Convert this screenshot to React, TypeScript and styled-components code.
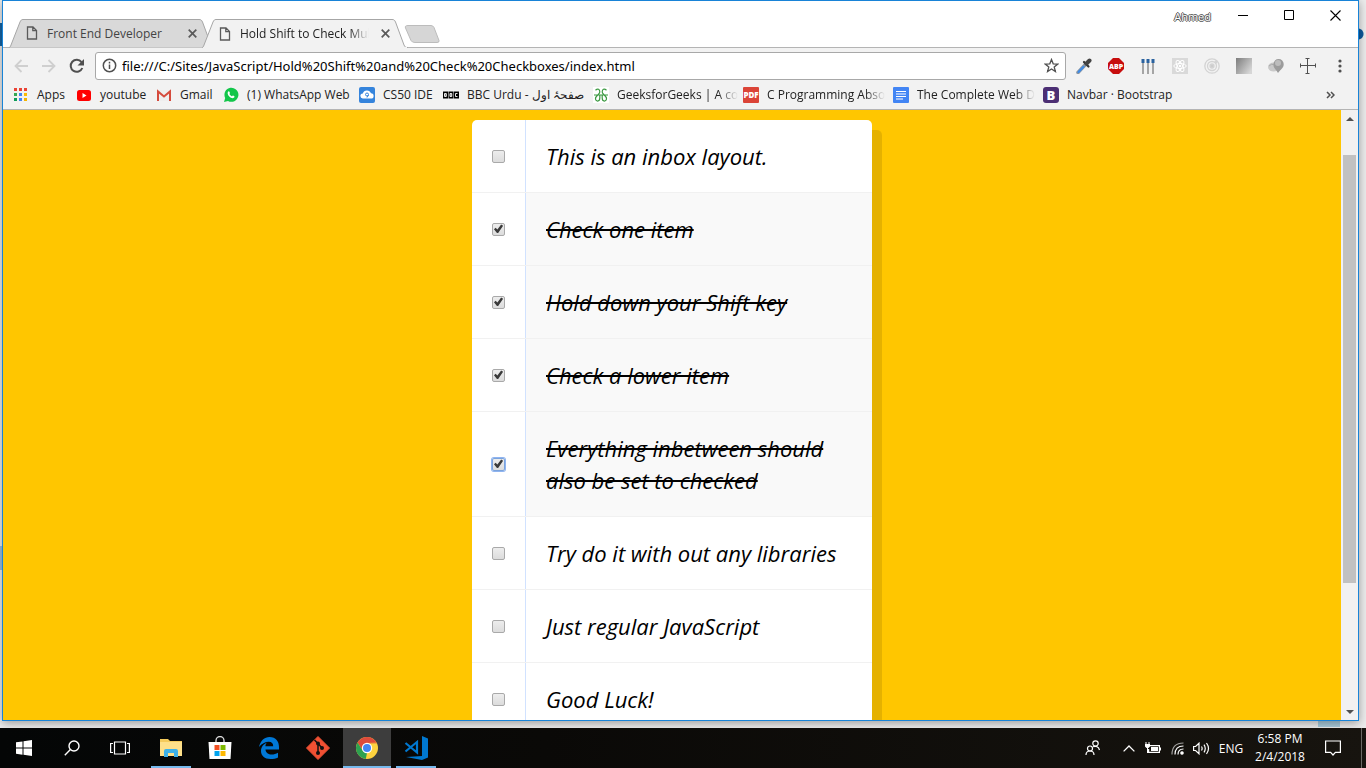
import React, { useRef, useState } from "react";
import styled, { createGlobalStyle, css } from "styled-components";

const ui = `"Segoe UI", "Open Sans", "Noto Sans", sans-serif`;

const GlobalStyle = createGlobalStyle`
  *, *::before, *::after { box-sizing: border-box; }
  body { margin: 0; font-family: ${ui}; font-size: 12px; color: #222; }
  button { border: 0; padding: 0; background: none; font: inherit; color: inherit; }
  svg { display: block; flex: none; }
`;

const Desktop = styled.div`
  height: 100vh;
  display: flex;
  flex-direction: column;
  overflow: hidden;
  background: linear-gradient(#1565a5, #1565a5) 0 23px / 3px 23px no-repeat,
    linear-gradient(#9fc0dd, #9fc0dd) 0 546px / 3px 24px no-repeat,
    radial-gradient(circle at 0 6px, #0c5a9c 5px, transparent 6px) right 1px top 28px / 7px 12px no-repeat,
    linear-gradient(#a9cbdc, #a9cbdc) right 26px bottom 41px / 22px 8px no-repeat, #ececec;
`;

const Window = styled.div`
  flex: 1;
  min-height: 0;
  margin: 0 7px 7px 2px;
  display: flex;
  flex-direction: column;
  border: 1px solid #1883d7;
  background: #fff;
  box-shadow: 0 2px 9px rgba(0, 0, 0, 0.35);
`;

const TitleBar = styled.header`
  height: 46px;
  flex: none;
  display: flex;
  justify-content: space-between;
  padding-left: 6px;
`;

const Tabs = styled.div`
  display: flex;
  align-items: flex-end;
`;

const Tab = styled.div<{ $active?: boolean }>`
  position: relative;
  z-index: ${(p) => (p.$active ? 2 : 1)};
  width: 206px;
  height: ${(p) => (p.$active ? "29px" : "28px")};
  margin-right: -13px;
  margin-bottom: ${(p) => (p.$active ? "-1px" : "0")};
  padding: 0 16px 0 17px;
  display: flex;
  align-items: center;
  gap: 9px;
  color: ${(p) => (p.$active ? "#222" : "#444")};
`;

const TabShape = styled.svg`
  position: absolute;
  inset: 0;
  z-index: -1;
`;

const fade = css`
  mask-image: linear-gradient(to left, transparent, #000 20px);
`;

const TabTitle = styled.span<{ $fade?: boolean }>`
  flex: 1;
  min-width: 0;
  white-space: nowrap;
  ${(p) => p.$fade && fade}
`;

const TabClose = styled.button`
  flex: none;
  width: 14px;
  height: 14px;
  display: grid;
  place-items: center;
`;

const NewTab = styled.button`
  margin: 0 0 4px 9px;
`;

const WindowControls = styled.div`
  display: flex;
  height: 30px;
`;

const Profile = styled.button`
  padding: 0 9px;
  font-size: 11px;
  color: #fff;
  text-shadow: 1px 0 #555, -1px 0 #555, 0 1px #555, 0 -1px #555;
`;

const WindowButton = styled.button`
  width: 46px;
  height: 28px;
  display: grid;
  place-items: center;
`;

const Toolbar = styled.div`
  height: 36px;
  flex: none;
  border-top: 1px solid #b4b4b4;
  background: #f2f2f2;
  display: flex;
  align-items: center;
  padding: 0 2px 0 4px;
`;

const NavButton = styled.button`
  width: 28px;
  height: 28px;
  display: grid;
  place-items: center;
`;

const Omnibox = styled.div`
  flex: 1;
  height: 28px;
  margin: 0 2px 0 4px;
  border: 1px solid #a8a8a8;
  border-radius: 3px;
  background: #fff;
  display: flex;
  align-items: center;
  gap: 5px;
  padding: 0 6px;
`;

const Url = styled.input`
  flex: 1;
  min-width: 0;
  border: 0;
  padding: 0;
  outline: 0;
  background: none;
  font: 13px "Segoe UI", "Noto Sans", sans-serif;
  color: #000;
`;

const Extension = styled.button`
  width: 32px;
  height: 28px;
  display: grid;
  place-items: center;
`;

const Bookmarks = styled.nav`
  height: 27px;
  flex: none;
  display: flex;
  justify-content: space-between;
  align-items: center;
  padding: 0 23px 3px 10px;
  border-bottom: 1px solid #b4b4b4;
  background: #f2f2f2;
`;

const BookmarkList = styled.div`
  display: flex;
`;

const Bookmark = styled.a<{ $width: number }>`
  width: ${(p) => p.$width}px;
  display: flex;
  align-items: center;
  gap: 8px;
  color: #222;
  text-decoration: none;
  white-space: nowrap;
`;

const BookmarkLabel = styled.span<{ $fade?: boolean }>`
  ${(p) => p.$fade && fade}
`;

const Viewport = styled.div`
  flex: 1;
  min-height: 0;
  display: flex;
`;

const Page = styled.main`
  flex: 1;
  min-width: 0;
  overflow: hidden;
  padding-top: 10px;
  background: #ffc600;
`;

const Inbox = styled.div`
  max-width: 400px;
  margin: 0 auto;
  border-radius: 5px;
  background: #fff;
  box-shadow: 10px 10px 0 rgba(0, 0, 0, 0.1);
`;

const Item = styled.div`
  display: flex;
  align-items: center;
  border-bottom: 1px solid #f1f1f1;
`;

const Check = styled.input`
  appearance: none;
  flex: none;
  width: 13px;
  height: 13px;
  margin: 20px;
  border: 1px solid #a9a9a9;
  border-radius: 2px;
  background: linear-gradient(#ededed, #dcdcdc);
  &:checked::before {
    content: "";
    display: block;
    width: 11px;
    height: 11px;
    background: #3a3a3a;
    clip-path: polygon(9% 52%, 24% 38%, 40% 55%, 74% 8%, 92% 20%, 47% 86%, 36% 86%);
  }
`;

const FocusCheck = styled(Check)`
  border-color: #7ba3dc;
  box-shadow: 0 0 0 1px #8fb4f0;
`;

const ItemText = styled.label<{ $done: boolean }>`
  flex: 1;
  padding: 20px;
  border-left: 1px solid #d1e2ff;
  font: italic 22px/32px "MV Boli", "Open Sans", sans-serif;
  color: #000;
  ${(p) => p.$done && css`
    background: #f9f9f9;
    text-decoration: line-through 2px;
  `}
`;

const Scrollbar = styled.div`
  width: 17px;
  flex: none;
  display: flex;
  flex-direction: column;
  background: #f1f1f1;
`;

const ScrollArrow = styled.button`
  height: 17px;
  flex: none;
  display: grid;
  place-items: center;
`;

const ScrollSpace = styled.div<{ $grow: number }>`
  flex: ${(p) => p.$grow} 0 0;
`;

const Thumb = styled(ScrollSpace)`
  margin: 0 2px;
  background: #c1c1c1;
`;

const Taskbar = styled.footer`
  height: 40px;
  flex: none;
  display: flex;
  justify-content: space-between;
  background: linear-gradient(90deg, #040606, #0a0907 40%, #17140f);
  color: #fff;
`;

const TaskGroup = styled.div`
  display: flex;
`;

const Apps = styled.div`
  display: flex;
  gap: 1px;
  margin-left: 3px;
`;

const TaskButton = styled.button<{ $running?: boolean; $active?: boolean }>`
  position: relative;
  width: 48px;
  height: 40px;
  display: grid;
  place-items: center;
  background: ${(p) => (p.$active ? "#3d3d3d" : "none")};
  ${(p) => (p.$running || p.$active) && css`
    &::after {
      content: "";
      position: absolute;
      left: ${p.$active ? "0" : "4px"};
      right: ${p.$active ? "0" : "4px"};
      bottom: 0;
      height: 2px;
      background: #76b9ed;
    }
  `}
`;

const TrayButton = styled.button<{ $width: number }>`
  width: ${(p) => p.$width}px;
  height: 40px;
  display: grid;
  place-items: center;
`;

const Clock = styled(TrayButton)`
  margin-left: 6px;
  align-content: center;
  line-height: 18px;
`;

const ShowDesktop = styled.button`
  width: 5px;
  border-left: 1px solid #6b6965;
`;

const PageIcon = () => (
  <svg width="12" height="14" viewBox="0 0 12 14" fill="none" stroke="#5a5a5a" strokeWidth="1.3">
    <path d="M1.5 1h5.5l3.5 3.5V13h-9zM6.8 1v3.7h3.7" />
  </svg>
);

const CloseGlyph = () => (
  <svg width="9" height="9" viewBox="0 0 9 9" stroke="#5a5a5a" strokeWidth="1.7">
    <path d="M.7.7l7.600 7.600M8.300.7L.7 8.300" />
  </svg>
);

function ChromeTab({ title, active }: { title: string; active?: boolean }) {
  return (
    <Tab $active={active}>
      <TabShape width="206" height="29" viewBox="0 0 206 29" fill={active ? "#f2f2f2" : "#d9d9d9"} stroke="#a6a6a6">
        <path d="M0 28.500C1 28.500 1.500 27.500 2 26L11 3C12 1 12.500.5 14 .5H190C192 .5 192.500 1 193.500 3L202 26C203 28 203.500 28.500 206 28.500" />
        {active && <path d="M1 28.500H205" stroke="#f2f2f2" />}
      </TabShape>
      <PageIcon />
      <TabTitle $fade={active}>{title}</TabTitle>
      <TabClose aria-label="Close tab"><CloseGlyph /></TabClose>
    </Tab>
  );
}

const AppsIcon = () => (
  <svg width="16" height="16">
    {["#ea4335", "#ea4335", "#ea4335", "#34a853", "#4285f4", "#fbbc05", "#0f9d58", "#4285f4", "#f4b400"].map((c, i) => (
      <rect key={i} x={1 + (i % 3) * 5} y={1 + Math.floor(i / 3) * 5} width="3" height="3" fill={c} />
    ))}
  </svg>
);
const YoutubeIcon = () => (
  <svg width="16" height="16"><rect x="1" y="3" width="14" height="11" rx="2.500" fill="#f00" /><path d="M6.500 6v5l4-2.500z" fill="#fff" /></svg>
);
const GmailIcon = () => (
  <svg width="16" height="16"><path d="M1 3h14v11H1z" fill="#eee" /><path d="M2 14V4.500l6 5 6-5V14" fill="none" stroke="#d54b3d" strokeWidth="2" /></svg>
);
const WhatsAppIcon = () => (
  <svg width="16" height="16">
    <path d="M1 15l1.200-4A7 7 0 1 1 5 13.900z" fill="#12c64a" />
    <path d="M5.300 4.500c.8-.8 1.300.3 1.600 1.400.1.500-.6.800-.5 1.200.5 1 1.300 1.700 2.300 2.200.5.100.8-.9 1.200-.8 1.200.4 2 1 1.600 1.600-1 2-3.700 1-5.200-.6C4.600 7.700 4.100 5.700 5.300 4.500z" fill="#fff" />
  </svg>
);
const Cs50Icon = () => (
  <svg width="16" height="16">
    <rect width="16" height="16" rx="2" fill="#3584dc" />
    <path d="M4 11.500a2.500 2.500 0 0 1-.2-5A4.300 4.300 0 0 1 12 6.300a2.600 2.600 0 0 1 0 5.200z" fill="#fff" />
    <circle cx="8" cy="7.500" r="1.500" fill="none" stroke="#3584dc" /><path d="M9.500 8L8 10.500" stroke="#3584dc" />
  </svg>
);
const BbcIcon = () => (
  <svg width="16" height="16">
    <path d="M0 4.500h5v7H0zM5.500 4.500h5v7h-5zM11 4.500h5v7h-5z" fill="#000" />
    <g fill="none" stroke="#fff" strokeWidth=".9"><path d="M1.500 6.500h1.800v3H1.500zM1.500 8h2M7 6.500h1.800v3H7zM7 8h2M14.500 6.500h-2v3h2" /></g>
  </svg>
);
const GfgIcon = () => (
  <svg width="16" height="16">
    <path d="M0 0h16v16H0z" fill="#fff" />
    <path d="M1 8h14M2.500 3.200C5 .8 6.800 2.500 6.800 5c0 2.500-4.300 3.500-4.300 6.500 0 3.500 4.300 3.500 4.300-.5V8M13.500 3.200C11 .8 9.200 2.500 9.200 5c0 2.500 4.300 3.500 4.300 6.500 0 3.500-4.300 3.500-4.300-.5V8" fill="none" stroke="#3c9a42" strokeWidth="1.200" />
  </svg>
);
const badgeText = { fontFamily: "Open Sans, sans-serif", fontWeight: 800, fill: "#fff", textAnchor: "middle" as const };
const PdfIcon = () => (
  <svg width="16" height="16"><rect width="16" height="16" rx="1" fill="#db4437" /><text x="8" y="11" fontSize="8" {...badgeText}>PDF</text></svg>
);
const DocsIcon = () => (
  <svg width="16" height="16"><rect width="16" height="16" rx="1" fill="#4285f4" /><path d="M3 4.500h10M3 7h10M3 9.500h10M3 12h7" stroke="#fff" strokeWidth="1.200" /></svg>
);
const BootstrapIcon = () => (
  <svg width="16" height="16"><rect width="16" height="16" rx="3" fill="#4c2f74" /><text x="8" y="13" fontSize="13" {...badgeText}>B</text></svg>
);

const bookmarks = [
  { label: "Apps", width: 63, Icon: AppsIcon },
  { label: "youtube", width: 80, Icon: YoutubeIcon },
  { label: "Gmail", width: 67, Icon: GmailIcon },
  { label: "(1) WhatsApp Web", width: 136, Icon: WhatsAppIcon },
  { label: "CS50 IDE", width: 84, Icon: Cs50Icon },
  { label: "BBC Urdu - صفحۂ اول", width: 150, Icon: BbcIcon },
  { label: "GeeksforGeeks | A co", width: 150, Icon: GfgIcon, fade: true },
  { label: "C Programming Abso", width: 150, Icon: PdfIcon, fade: true },
  { label: "The Complete Web D", width: 150, Icon: DocsIcon, fade: true },
  { label: "Navbar · Bootstrap", width: 150, Icon: BootstrapIcon },
];

const extensions = [
  { name: "Color picker", icon: (
    <svg width="16" height="16" strokeLinecap="round">
      <path d="M2 14.500L9 7" stroke="#8b96a3" strokeWidth="3.500" /><path d="M2.500 14L7.500 8.800" stroke="#3d8be8" strokeWidth="2" />
      <path d="M8 4l4.500 4.500" stroke="#333" strokeWidth="2.200" /><path d="M10.500 5.500l3-3" stroke="#444" strokeWidth="4" />
    </svg>) },
  { name: "Adblock Plus", icon: (
    <svg width="16" height="16"><path d="M5 0h6l5 5v6l-5 5H5l-5-5V5z" fill="#c70d0d" /><text x="8" y="11" fontSize="7" {...badgeText}>ABP</text></svg>) },
  { name: "Sliders", icon: (
    <svg width="16" height="16"><path d="M3 5v11M8 5v11M13 5v11" stroke="#a5a5a5" strokeWidth="2" /><path d="M1.500 1h3v4h-3zM6.500 1h3v4h-3zM11.500 1h3v4h-3z" fill="#2a629f" /></svg>) },
  { name: "React tools", icon: (
    <svg width="16" height="16"><path d="M0 0h16v16H0z" fill="#d9d9d9" /><g fill="none" stroke="#fff"><ellipse cx="8" cy="8" rx="6.200" ry="2.500" /><ellipse cx="8" cy="8" rx="6.200" ry="2.500" transform="rotate(60 8 8)" /><ellipse cx="8" cy="8" rx="6.200" ry="2.500" transform="rotate(120 8 8)" /></g><circle cx="8" cy="8" r="1.200" fill="#fff" /></svg>) },
  { name: "Orbit", icon: (
    <svg width="16" height="16" fill="none" stroke="#d3d3d3" strokeWidth="1.300"><circle cx="8" cy="8" r="7.200" /><circle cx="8" cy="8" r="4.500" /><circle cx="8" cy="8" r="2" fill="#ccc" /><circle cx="12" cy="4" r="1" fill="#ccc" /></svg>) },
  { name: "Gradient", icon: (
    <svg width="16" height="16"><defs><linearGradient id="shade" x2="1" y2="0.700"><stop stopColor="#7c7c7c" /><stop offset="1" stopColor="#d6d6d6" /></linearGradient></defs><path d="M0 0h16v16H0z" fill="url(#shade)" /></svg>) },
  { name: "Globe", icon: (
    <svg width="16" height="16"><ellipse cx="5.500" cy="9" rx="5.500" ry="4.500" fill="#c9c9c9" /><path d="M1 8q5-5 8 4" fill="none" stroke="#aaa" /><path d="M10 15C8 11 5 10 5.500 6a5 5 0 0 1 10.200 0c.3 4-3 5-5.700 9z" fill="#9c9c9c" /><circle cx="10" cy="5" r="3" fill="#bdbdbd" /></svg>) },
  { name: "Page ruler", icon: (
    <svg width="16" height="16" fill="none" stroke="#505050" strokeWidth="1"><path d="M7.500 1v14M1 7.500h14M5.500.5h4M5.500 15.500h4M.5 5.500v4M15.500 5.500v4" /></svg>) },
];

const tasks = [
  "This is an inbox layout.",
  "Check one item",
  "Hold down your Shift key",
  "Check a lower item",
  "Everything inbetween should also be set to checked",
  "Try do it with out any libraries",
  "Just regular JavaScript",
  "Good Luck!",
];

function TaskList() {
  const [done, setDone] = useState(tasks.map((_, i) => i >= 1 && i <= 4));
  const last = useRef(4);
  const toggle = (i: number, shift: boolean) => {
    const from = shift ? Math.min(i, last.current) : i;
    const to = shift ? Math.max(i, last.current) : i;
    setDone(done.map((d, n) => (n >= from && n <= to ? !done[i] : d)));
    last.current = i;
  };
  return (
    <Inbox>
      {tasks.map((text, i) => {
        const Box = i === last.current ? FocusCheck : Check;
        return (
          <Item key={text}>
            <Box
              type="checkbox"
              id={`task-${i}`}
              checked={done[i]}
              onChange={(e) => toggle(i, (e.nativeEvent as MouseEvent).shiftKey)}
            />
            <ItemText htmlFor={`task-${i}`} $done={done[i]}>{text}</ItemText>
          </Item>
        );
      })}
    </Inbox>
  );
}

const apps = [
  { name: "File Explorer", running: true, icon: (
    <svg width="24" height="24"><path d="M1 3h8l2 2h12v15H1z" fill="#f5cb5c" /><path d="M1 6h22v14H1z" fill="#fee08a" /><path d="M5 21v-6q0-2 2-2h10q2 0 2 2v6h-4v-4H9v4z" fill="#3eb1e8" /></svg>) },
  { name: "Store", icon: (
    <svg width="24" height="24"><path d="M8 6V4.500a4 4 0 0 1 8 0V6" fill="none" stroke="#ddd" strokeWidth="1.300" /><path d="M.5 6h23l-1 17h-21z" fill="#fff" /><path d="M6.500 9h5v5h-5z" fill="#f25022" /><path d="M12.500 9h5v5h-5z" fill="#7fba00" /><path d="M6.500 15h5v5h-5z" fill="#00a4ef" /><path d="M12.500 15h5v5h-5z" fill="#ffb900" /></svg>) },
  { name: "Edge", icon: (
    <svg width="24" height="24"><path d="M2 11C3.500 4.500 7.500 1 12.500 1 19 1 22 5.500 22 11v2.500H8.500c.2 3.500 3 5 6 5 2.500 0 4.500-.6 6.500-1.800v4.800c-2 1-4.500 1.500-7.500 1.500C7.500 23 4 19.500 4 15c0-4 2.500-7 6-8.500-1 1.200-1.500 2.200-1.600 3.700h7.800c0-3-1.500-4.500-4.400-4.500-3.600 0-7.300 2-9.800 5.300z" fill="#0078d7" /></svg>) },
  { name: "Git", icon: (
    <svg width="24" height="24"><path d="M12 .5L23.500 12 12 23.500.5 12z" fill="#f05033" stroke="#f05033" strokeLinejoin="round" /><path d="M8.500 4l3 3M12 7v10M12 7.500l4 4.500" stroke="#111" strokeWidth="1.500" /><circle cx="12" cy="7.500" r="2" fill="#111" /><circle cx="12" cy="17" r="2" fill="#111" /><circle cx="16" cy="12" r="2" fill="#111" /></svg>) },
  { name: "Chrome", active: true, icon: (
    <svg width="24" height="24"><circle cx="12" cy="12" r="11" fill="#fdd23e" /><path d="M2.500 6.500A11 11 0 0 1 21.500 6.500L12 7 7.700 14.500z" fill="#de4b3c" /><path d="M2.500 6.500l5.200 8L12 17l-1.200 6A11 11 0 0 1 2.500 6.500z" fill="#2da150" /><path d="M12 7h9.800" stroke="#de4b3c" strokeWidth=".6" /><circle cx="12" cy="12" r="5.200" fill="#fff" /><circle cx="12" cy="12" r="4" fill="#4285f4" /></svg>) },
  { name: "Visual Studio Code", running: true, icon: (
    <svg width="24" height="24"><path d="M18 0l6 2.500v19L18 24 2 21l16-1z" fill="#0078d0" /><path d="M1.500 7L13 16.500V6L1.500 15.500" fill="none" stroke="#0078d0" strokeWidth="2.200" /></svg>) },
];

export default function App() {
  return (
    <Desktop>
      <GlobalStyle />
      <Window>
        <TitleBar>
          <Tabs>
            <ChromeTab title="Front End Developer" />
            <ChromeTab title="Hold Shift to Check Mult" active />
            <NewTab aria-label="New tab">
              <svg width="36" height="18" viewBox="0 0 36 18"><path d="M4 .5h23q2 0 3 2l5 13q.5 2-2 2H11q-3 0-4-2L1.500 3q-1-2.500 2.500-2.500z" fill="#d6d6d6" stroke="#bcbcbc" /></svg>
            </NewTab>
          </Tabs>
          <WindowControls>
            <Profile>Ahmed</Profile>
            <WindowButton aria-label="Minimize"><svg width="10" height="10"><path d="M0 5.500h10" stroke="#000" /></svg></WindowButton>
            <WindowButton aria-label="Maximize"><svg width="10" height="10"><path d="M.5.5h9v9h-9z" fill="none" stroke="#000" /></svg></WindowButton>
            <WindowButton aria-label="Close"><svg width="11" height="11"><path d="M.5.5l10 10M10.500.5l-10 10" stroke="#000" strokeWidth="1.100" /></svg></WindowButton>
          </WindowControls>
        </TitleBar>
        <Toolbar>
          <NavButton aria-label="Back"><svg width="14" height="14" fill="none" stroke="#cfcfcf" strokeWidth="1.800"><path d="M14 7H1.500M7.500 1L1.500 7l6 6" /></svg></NavButton>
          <NavButton aria-label="Forward"><svg width="14" height="14" fill="none" stroke="#cfcfcf" strokeWidth="1.800"><path d="M0 7h12.500M6.500 1l6 6-6 6" /></svg></NavButton>
          <NavButton aria-label="Reload"><svg width="16" height="16"><path d="M13.300 10A6 6 0 1 1 12.500 4.200" fill="none" stroke="#505050" strokeWidth="2" /><path d="M15 1v6.500H8.500z" fill="#505050" /></svg></NavButton>
          <Omnibox>
            <svg width="15" height="15" fill="none" stroke="#505050" strokeWidth="1.500"><circle cx="7.500" cy="7.500" r="6.200" /><path d="M7.500 6.500V11M7.500 3.800v1.600" /></svg>
            <Url aria-label="Address" defaultValue="file:///C:/Sites/JavaScript/Hold%20Shift%20and%20Check%20Checkboxes/index.html" />
            <svg width="15" height="15" fill="none" stroke="#505050" strokeWidth="1.300"><path d="M7.500 1.500l1.700 4.300 4.600.3-3.600 2.900 1.200 4.500-3.900-2.500-3.900 2.500L4.800 9 1.200 6.100l4.600-.3z" /></svg>
          </Omnibox>
          {extensions.map((e) => (
            <Extension key={e.name} aria-label={e.name}>{e.icon}</Extension>
          ))}
          <Extension aria-label="Menu"><svg width="4" height="14" fill="#505050"><circle cx="2" cy="2" r="1.600" /><circle cx="2" cy="7" r="1.600" /><circle cx="2" cy="12" r="1.600" /></svg></Extension>
        </Toolbar>
        <Bookmarks>
          <BookmarkList>
            {bookmarks.map(({ label, width, Icon, fade: cut }) => (
              <Bookmark key={label} href="#" $width={width}>
                <Icon />
                <BookmarkLabel $fade={cut}>{label}</BookmarkLabel>
              </Bookmark>
            ))}
          </BookmarkList>
          <button aria-label="More bookmarks"><svg width="9" height="8" fill="none" stroke="#505050" strokeWidth="1.500"><path d="M1 1l3 3-3 3M5 1l3 3-3 3" /></svg></button>
        </Bookmarks>
        <Viewport>
          <Page><TaskList /></Page>
          <Scrollbar>
            <ScrollArrow aria-label="Scroll up"><svg width="8" height="4"><path d="M0 4l4-4 4 4z" fill="#505050" /></svg></ScrollArrow>
            <ScrollSpace $grow={28} />
            <Thumb $grow={428} />
            <ScrollSpace $grow={120} />
            <ScrollArrow aria-label="Scroll down"><svg width="8" height="4"><path d="M0 0l4 4 4-4z" fill="#505050" /></svg></ScrollArrow>
          </Scrollbar>
        </Viewport>
      </Window>
      <Taskbar>
        <TaskGroup>
          <TaskButton aria-label="Start"><svg width="16" height="16" fill="#fff"><path d="M0 2.300L6.500 1.400V7.500H0zM7.500 1.200L16 0v7.500H7.500zM0 8.500h6.500v6.200L0 13.800zM7.500 8.500H16V16l-8.500-1.200z" /></svg></TaskButton>
          <TaskButton aria-label="Search"><svg width="16" height="16" fill="none" stroke="#fff" strokeWidth="1.400"><circle cx="10" cy="6" r="5" /><path d="M6.400 9.600L.8 15.200" /></svg></TaskButton>
          <TaskButton aria-label="Task view"><svg width="20" height="14" fill="none" stroke="#fff" strokeWidth="1.200"><path d="M4.500 1h11v12h-11zM3 2.500H.6v9H3M17 2.500h2.400v9H17" /></svg></TaskButton>
          <Apps>
            {apps.map((a) => (
              <TaskButton key={a.name} aria-label={a.name} $running={a.running} $active={a.active}>{a.icon}</TaskButton>
            ))}
          </Apps>
        </TaskGroup>
        <TaskGroup>
          <TrayButton $width={48} aria-label="People"><svg width="16" height="16" fill="none" stroke="#fff" strokeWidth="1.200"><circle cx="10.500" cy="3.500" r="2.700" /><path d="M8 6.800q5-1.600 6.500 3.200" /><circle cx="5" cy="8.500" r="2.500" /><path d="M1 15q0-4 4-4t4 4" /></svg></TrayButton>
          <TrayButton $width={24} aria-label="Hidden icons"><svg width="12" height="7" fill="none" stroke="#fff" strokeWidth="1.300"><path d="M.6 6.400L6 1l5.400 5.400" /></svg></TrayButton>
          <TrayButton $width={24} aria-label="Battery"><svg width="16" height="12"><path d="M5 3.600h9.400v6.800H3.600V7" fill="none" stroke="#fff" strokeWidth="1.200" /><path d="M6 5h7v4H6zM15 5.500h1v3h-1zM0 2h5v2.500L3.500 6h-2L0 4.500zM.5 0h1v2h-1zM3.500 0h1v2h-1zM2 6h1v5H2z" fill="#fff" /></svg></TrayButton>
          <TrayButton $width={24} aria-label="Network"><svg width="13" height="13" fill="none" stroke="#fff" strokeWidth="1.200"><path d="M1 12.500Q1 1 12.500 1" opacity=".6" /><path d="M4 12.500Q4 4 12.500 4M7 12.500Q7 7 12.500 7" /><circle cx="11" cy="11" r="1.200" fill="#fff" /></svg></TrayButton>
          <TrayButton $width={24} aria-label="Volume"><svg width="17" height="13" fill="none" stroke="#fff" strokeWidth="1.200"><path d="M.6 4.500h2L6 1.200v10.600L2.600 8.500h-2zM8.500 4.500q1.300 2 0 4M11 2.700q2.500 3.800 0 7.600M13.500 1q4 5.500 0 11" /></svg></TrayButton>
          <TrayButton $width={36}>ENG</TrayButton>
          <Clock $width={50}><span>6:58 PM</span><span>2/4/2018</span></Clock>
          <TrayButton $width={56} aria-label="Notifications"><svg width="16" height="16" fill="none" stroke="#fff" strokeWidth="1.200"><path d="M.6 1h14.800v11.400h-5L8 15l-2.400-2.600h-5z" /></svg></TrayButton>
          <ShowDesktop aria-label="Show desktop" />
        </TaskGroup>
      </Taskbar>
    </Desktop>
  );
}
